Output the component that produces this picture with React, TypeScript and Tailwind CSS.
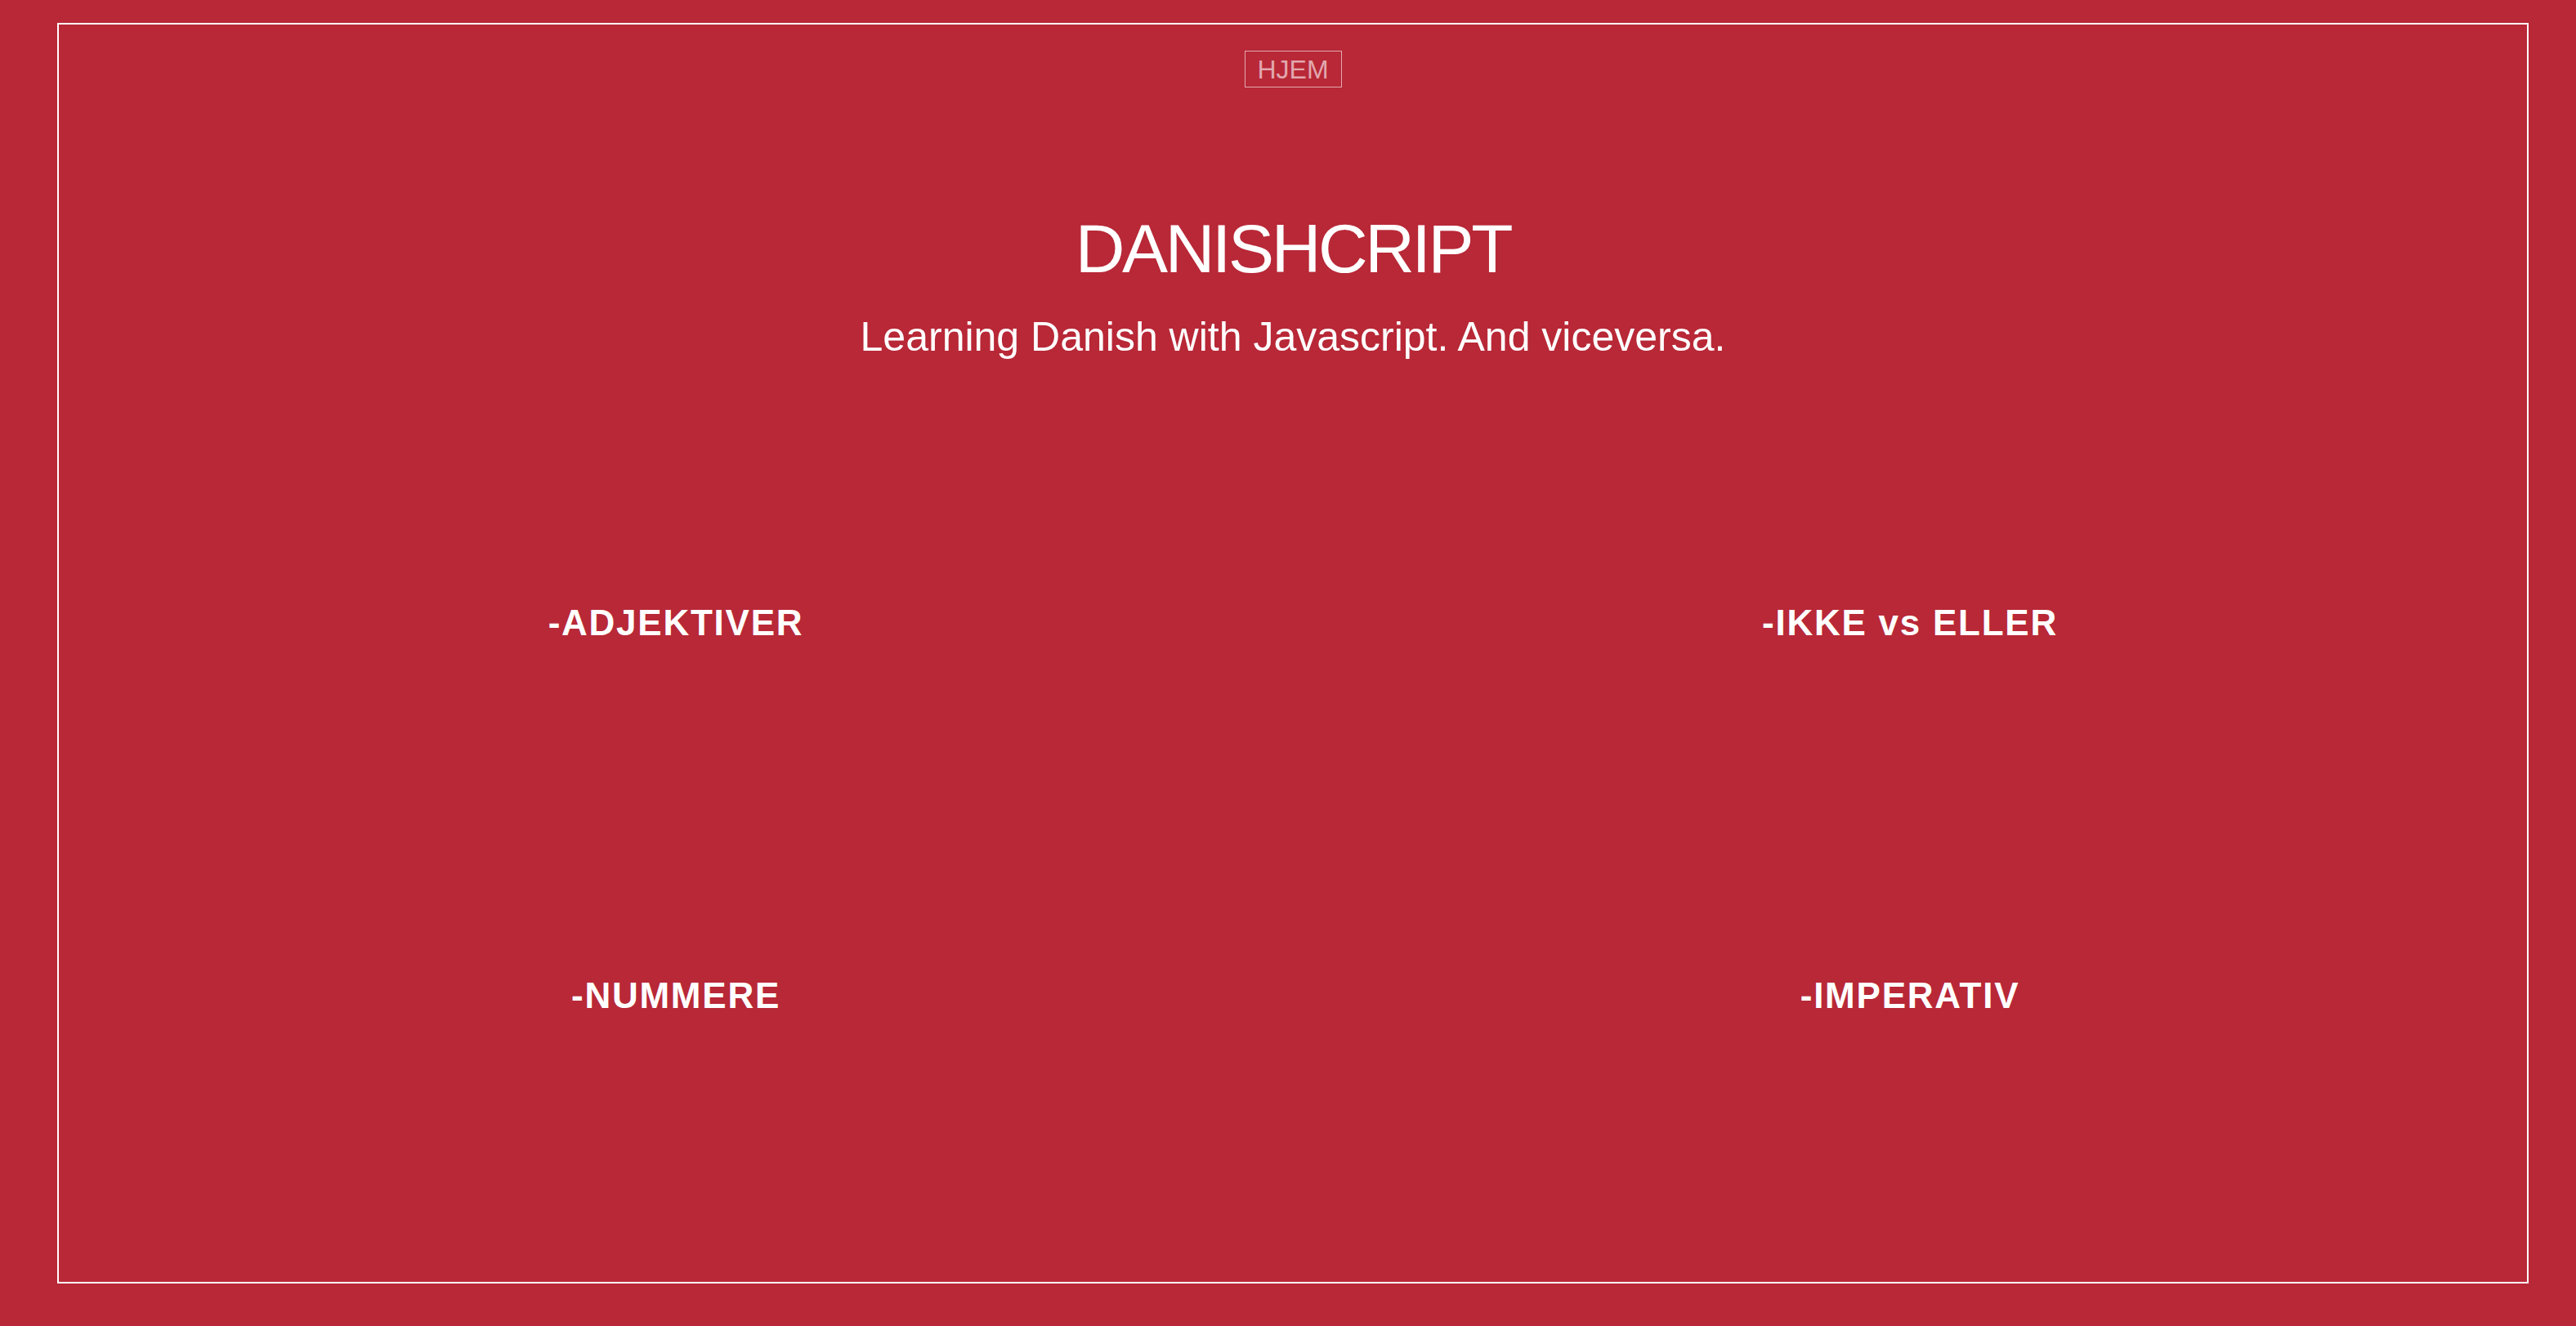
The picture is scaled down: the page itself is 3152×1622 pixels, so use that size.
import React from 'react';

const topics = ['-ADJEKTIVER', '-IKKE vs ELLER', '-NUMMERE', '-IMPERATIV'];

const App = () => {
  return (
    <div
      className="min-h-screen w-full bg-[#b82837] pt-[28px] pl-[70px] text-white"
      style={{ fontFamily: '"Liberation Sans", Arial, sans-serif' }}
    >
      <div className="flex h-[1542px] w-[3024px] flex-col items-center border-2 border-white">
        <a
          href="#"
          className="mt-[32px] flex h-[45px] w-[119px] items-center justify-center border border-white/60 text-[32px] leading-none text-white/60"
        >
          HJEM
        </a>

        <h1 className="mt-[155px] text-[84px] font-normal leading-none tracking-[-0.04em]">DANISHCRIPT</h1>
        <p className="mt-[41px] text-[50px] leading-none">Learning Danish with Javascript. And viceversa.</p>

        <div className="mt-[303px] grid w-full grid-cols-2 gap-y-[412px]">
          {topics.map((t) => (
            <a
              key={t}
              href="#"
              className="text-center text-[44px] font-bold leading-none tracking-[0.04em]"
            >
              {t}
            </a>
          ))}
        </div>
      </div>
    </div>
  );
};

export default App;
